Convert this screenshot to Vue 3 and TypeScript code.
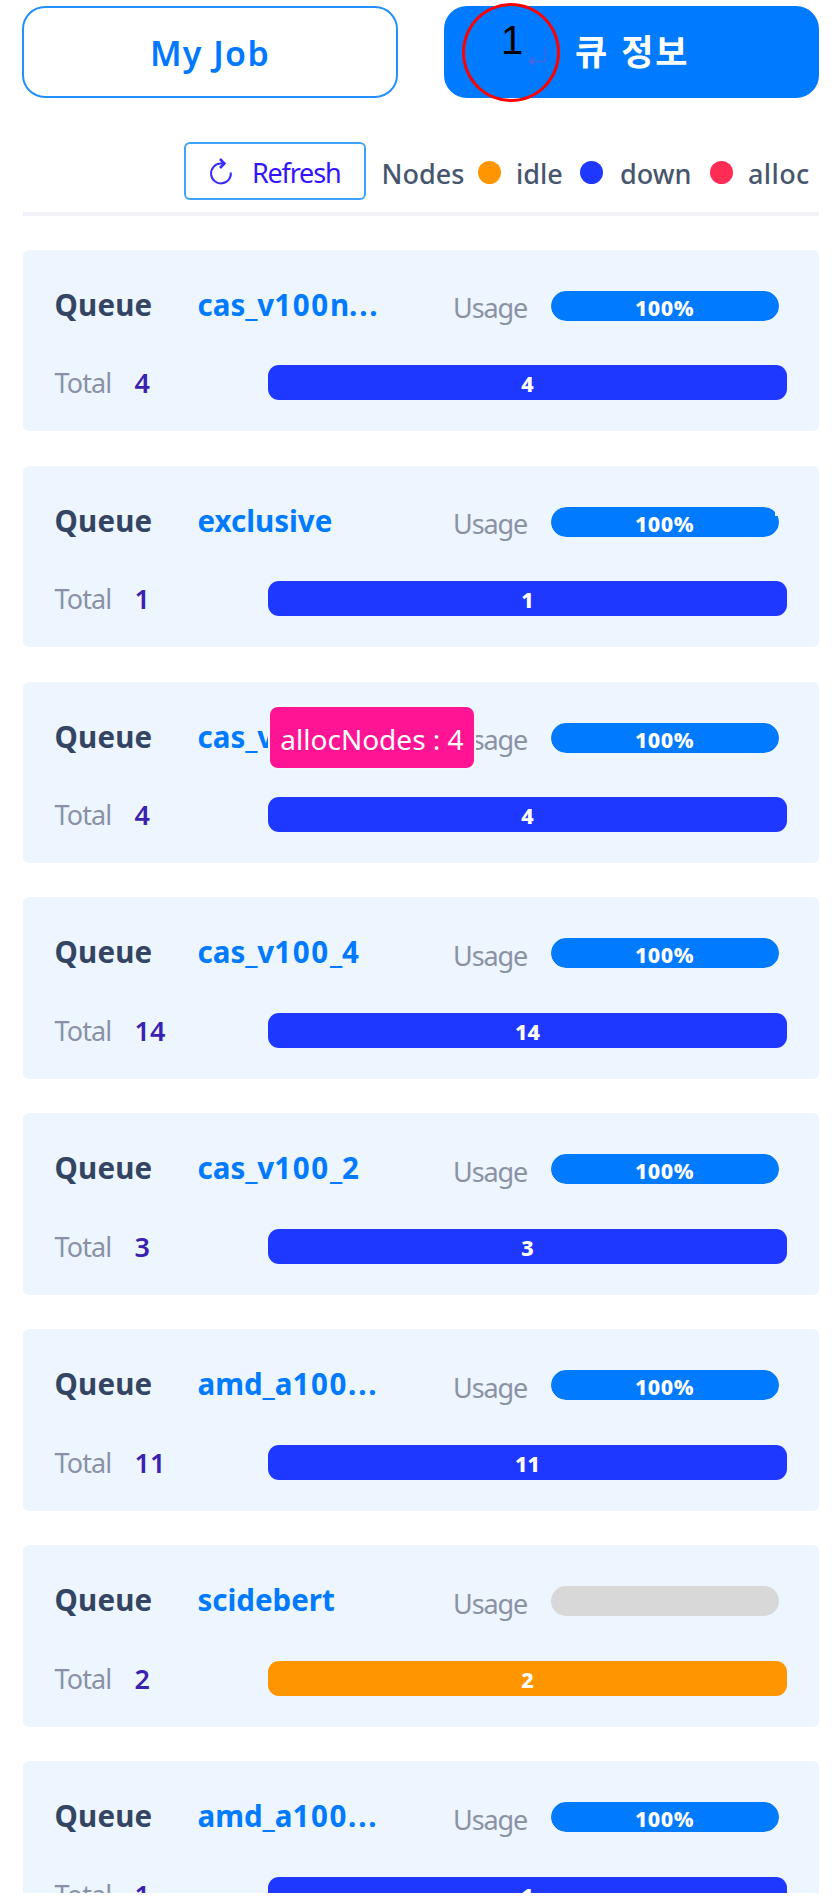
<script setup lang="ts">
interface Queue {
  name: string
  total: number
  state: 'down' | 'idle'
  usage: number
  tooltip?: string
  notched?: boolean
}

const legend: string[] = ['idle', 'down', 'alloc']

const queues: Queue[] = [
  { name: 'cas_v100n...', total: 4, state: 'down', usage: 100 },
  { name: 'exclusive', total: 1, state: 'down', usage: 100, notched: true },
  { name: 'cas_v', total: 4, state: 'down', usage: 100, tooltip: 'allocNodes : 4' },
  { name: 'cas_v100_4', total: 14, state: 'down', usage: 100 },
  { name: 'cas_v100_2', total: 3, state: 'down', usage: 100 },
  { name: 'amd_a100...', total: 11, state: 'down', usage: 100 },
  { name: 'scidebert', total: 2, state: 'idle', usage: 0 },
  { name: 'amd_a100...', total: 1, state: 'down', usage: 100 },
]

// Digits and the trailing ellipsis are spaced wider than the letters.
const parts = (name: string): string[] => name.match(/\d+|\.+|[^\d.]+/g) ?? []
const partClass = (part: string): string =>
  /^\d/.test(part) ? 'digits' : part.startsWith('.') ? 'dots' : ''
</script>

<template>
  <main class="page">
    <nav class="tabs">
      <button class="tab"><span class="tab-text">My Job</span></button>
      <button class="tab active">
        <span class="ko">큐 정보</span>
        <span class="marker">
          <span class="marker-num">1</span>
          <svg class="ret" width="20" height="22" viewBox="0 0 20 22">
            <path d="M17.5 1V15.5H5" fill="none" stroke="#3e68e0" stroke-width="1.5" />
            <path d="M0 15.5L6 10.5V20.5Z" fill="#3e68e0" />
          </svg>
        </span>
      </button>
    </nav>

    <div class="toolbar">
      <button class="refresh">
        <svg width="24" height="28" viewBox="0 0 24 28" fill="none" stroke="#382cff">
          <path d="M14 5.6H11.5A9.9 9.9 0 1 0 21.8 14.5" stroke-width="2" />
          <path d="M11 1L15.4 5.5L11 10" stroke-width="2.6" />
        </svg>
        <span>Refresh</span>
      </button>
      <span class="nodes">Nodes</span>
      <span v-for="item in legend" :key="item" class="legend" :class="'legend-' + item">
        <i class="dot" :class="item"></i><span class="legend-text">{{ item }}</span>
      </span>
    </div>

    <section class="list">
      <article v-for="(q, i) in queues" :key="i" class="card">
        <div class="row head">
          <span class="label">Queue</span>
          <span class="name"><span v-for="(p, j) in parts(q.name)" :key="j" :class="partClass(p)">{{ p }}</span></span>
          <span class="usage">Usage</span>
          <div class="pill">
            <div class="fill" :class="{ notched: q.notched }" :style="{ width: q.usage + '%' }">
              <span v-if="q.usage">{{ q.usage }}%</span>
            </div>
          </div>
        </div>
        <div class="row foot">
          <span class="total">Total</span>
          <span class="count">{{ q.total }}</span>
          <div class="bar" :class="q.state"><span>{{ q.total }}</span></div>
        </div>
        <div v-if="q.tooltip" class="tooltip">{{ q.tooltip }}</div>
      </article>
    </section>
  </main>
</template>

<style>
body {
  background: #fff;
}
</style>

<style scoped>
.page {
  box-sizing: border-box;
  width: 838px;
  height: 1893px;
  padding: 6px 19px 0 22px;
  overflow: hidden;
  font-family: 'Noto Sans', 'Noto Sans CJK KR', sans-serif;
  white-space: nowrap;
}
button {
  padding: 0;
  font-family: inherit;
  background: #fff;
}
.tabs {
  display: flex;
  justify-content: space-between;
  height: 92px;
}
.tab {
  position: relative;
  box-sizing: border-box;
  width: 376px;
  border: 2.5px solid #2490ff;
  border-radius: 23px;
  color: #0078ff;
  font-size: 34px;
  font-weight: 600;
  letter-spacing: 1.4px;
}
.tab-text {
  display: block;
  padding-top: 2px;
}
.tab.active {
  width: 375px;
  background: #007aff;
  border-color: #007aff;
  color: #fff;
}
.ko {
  display: block;
  padding-bottom: 5px;
  padding-left: 1px;
  font-family: 'Noto Sans CJK KR', sans-serif;
  font-size: 35px;
  font-weight: 700;
  letter-spacing: 1.6px;
  word-spacing: 3px;
}
.marker {
  position: absolute;
  left: 16px;
  top: -5px;
  box-sizing: border-box;
  width: 98px;
  height: 99px;
  border: 3px solid #f00;
  border-radius: 50%;
  letter-spacing: 0;
}
.marker-num {
  position: absolute;
  left: 36px;
  top: 12px;
  color: #000;
  font: 400 40px/44px 'Liberation Sans', sans-serif;
}
.ret {
  position: absolute;
  left: 63px;
  top: 40px;
}
.toolbar {
  display: flex;
  align-items: center;
  box-sizing: border-box;
  height: 73.5px;
  margin-top: 44px;
  margin-left: 1px;
  padding: 0 0 11.5px 161px;
  border-bottom: 4px solid #f1f1f7;
  color: #47566e;
  font-size: 27px;
  font-weight: 500;
}
.refresh {
  display: flex;
  align-items: center;
  box-sizing: border-box;
  width: 182px;
  height: 58px;
  padding: 3px 0 0 23px;
  gap: 19px;
  border: 2.5px solid #3fa3fb;
  border-radius: 6px;
  color: #3214ff;
  font-size: 27px;
  letter-spacing: -1.2px;
}
.refresh svg {
  margin-bottom: 2px;
}
.nodes {
  width: 96.5px;
  margin-left: 15.5px;
  padding-top: 4px;
}
.legend {
  display: flex;
  align-items: center;
}
.legend-text {
  padding-top: 4px;
}
.dot {
  width: 23px;
  height: 23px;
  margin: 2px 15px 0 0;
  border-radius: 50%;
}
.legend-idle {
  width: 102px;
}
.legend-down {
  width: 130px;
}
.legend-down .dot {
  margin-right: 17px;
}
.legend-alloc {
  letter-spacing: 0.4px;
}
.idle {
  background: #ff9500;
}
.down {
  background: #1f38ff;
}
.alloc {
  background: #ff2d55;
}
.list {
  display: flex;
  flex-direction: column;
  gap: 34.4px;
  margin-top: 34.3px;
}
.card {
  position: relative;
  flex: none;
  box-sizing: border-box;
  width: 796px;
  height: 181.5px;
  margin-left: 1px;
  padding: 31px 0 0 31.5px;
  border-radius: 6px;
  background: #edf5ff;
}
.row {
  display: flex;
  align-items: center;
}
.head {
  height: 50px;
}
.label,
.name {
  padding-bottom: 3px;
  font-size: 29.5px;
  font-weight: 700;
}
.label {
  width: 143px;
  color: #344563;
  letter-spacing: 0.2px;
}
.name {
  width: 255.5px;
  color: #007aff;
}
.digits {
  letter-spacing: 1.7px;
}
.dots {
  letter-spacing: 1.8px;
}
.usage {
  width: 97.5px;
  padding-top: 4px;
  color: #8993a4;
  font-size: 27px;
  letter-spacing: -1.1px;
}
.pill {
  width: 228px;
  height: 30px;
  border-radius: 15px;
  overflow: hidden;
  background: #d8d8d8;
}
.fill {
  height: 30px;
  border-radius: 15px;
  background: #007aff;
  color: #fff;
  font-size: 21.5px;
  font-weight: 800;
  line-height: 33px;
  letter-spacing: 0.5px;
  text-align: center;
}
.foot {
  height: 36px;
  margin-top: 34px;
}
.total {
  width: 80px;
  color: #8993a4;
  font-size: 27px;
  letter-spacing: -0.9px;
}
.count {
  width: 133.5px;
  color: #3a22b0;
  font-size: 27px;
  font-weight: 600;
}
.bar {
  width: 519px;
  height: 35px;
  border-radius: 11px;
  color: #fff;
  font-size: 21.5px;
  font-weight: 800;
  line-height: 38px;
  text-align: center;
}
.tooltip {
  position: absolute;
  left: 247px;
  top: 25px;
  width: 204px;
  height: 61.5px;
  border-radius: 8px;
  background: #ff1493;
  box-shadow: 0 0 0 2px #f1f8ff;
  color: #fff;
  font-size: 28px;
  line-height: 64px;
  text-align: center;
}
.notched {
  background: linear-gradient(#edf5ff, #edf5ff) right top / 4px 9px no-repeat, #007aff;
}
</style>
